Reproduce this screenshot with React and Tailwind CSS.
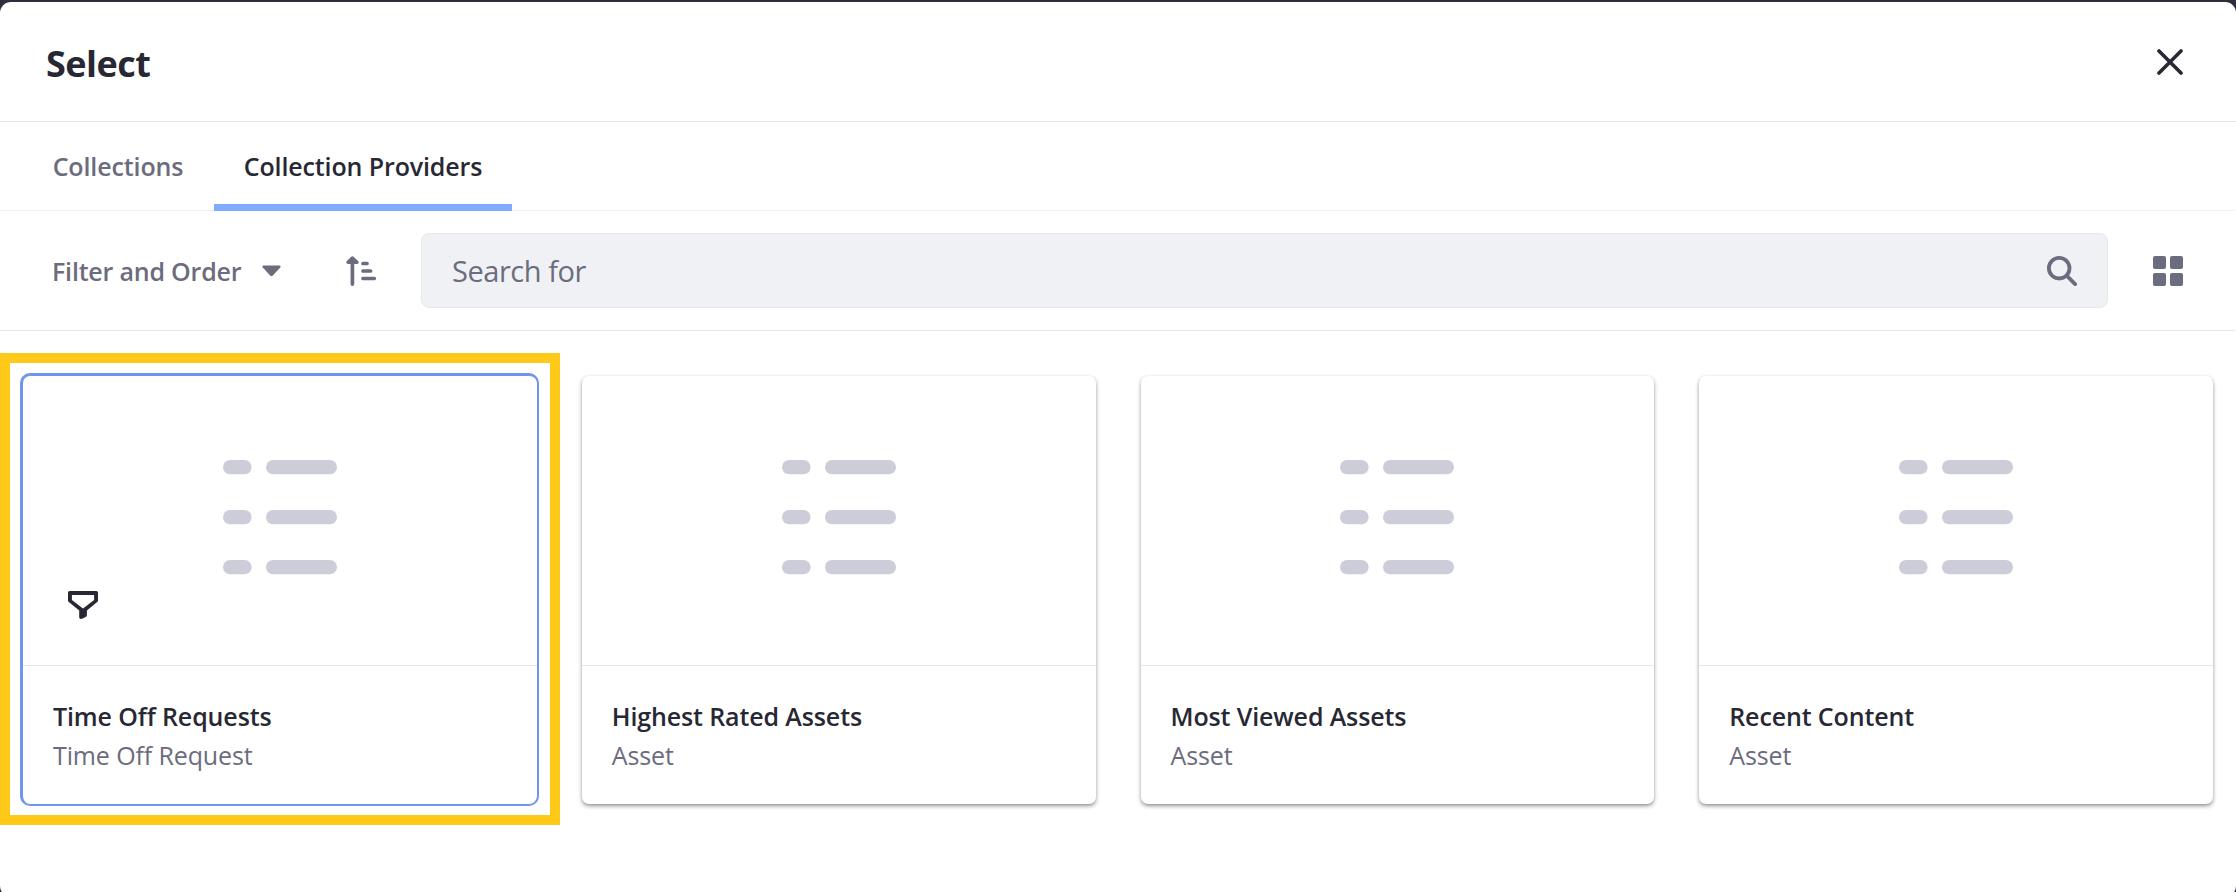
const cards = [
  { title: 'Time Off Requests', subtitle: 'Time Off Request', selected: true },
  { title: 'Highest Rated Assets', subtitle: 'Asset' },
  { title: 'Most Viewed Assets', subtitle: 'Asset' },
  { title: 'Recent Content', subtitle: 'Asset' },
];

function CloseIcon() {
  return (
    <svg width="26" height="26" viewBox="0 0 26 26" fill="none" stroke="currentColor" strokeWidth="3.6" strokeLinecap="round">
      <path d="M2 2 24 24M24 2 2 24" />
    </svg>
  );
}

function SortIcon() {
  return (
    <svg width="30" height="30" viewBox="0 0 30 30" fill="none" stroke="currentColor" strokeWidth="3.7" strokeLinecap="round" strokeLinejoin="round">
      <path d="M6.4 2.6V28.1M17 7.5h4M17 15h7.6M17 22.5h11.2" />
      <path d="M2 6.3 6.4 2l4.5 4.3z" fill="currentColor" strokeWidth="3.4" />
    </svg>
  );
}

function SearchIcon() {
  return (
    <svg width="30" height="30" viewBox="0 0 30 30" fill="none" stroke="currentColor" strokeWidth="3.8" strokeLinecap="round">
      <circle cx="12.2" cy="12.2" r="10.3" />
      <path d="m20.2 20.2 7.9 7.9" />
    </svg>
  );
}

function GridIcon() {
  return (
    <svg width="30" height="30" viewBox="0 0 30 30" fill="currentColor">
      <rect width="13" height="13" rx="1.9" />
      <rect x="17" width="13" height="13" rx="1.9" />
      <rect y="17" width="13" height="13" rx="1.9" />
      <rect x="17" y="17" width="13" height="13" rx="1.9" />
    </svg>
  );
}

function FilterIcon() {
  return (
    <svg width="30" height="28" viewBox="0 0 30 28" fill="currentColor" fillRule="evenodd">
      <path d="M1.6 0H28.4Q30 0 30 1.6V9.4Q30 10.4 29.2 11.1L18.9 19.4V24.2Q18.9 25.2 18 25.8L14.6 27.6Q11.2 28.6 11.2 26.2V19.4L.8 11.1Q0 10.4 0 9.4V1.6Q0 0 1.6 0ZM3.9 4V9L15 17.6 26.1 9V4Z" />
    </svg>
  );
}

function ListPicture() {
  return (
    <svg width="114" height="115" viewBox="0 0 114 115" fill="#cdcdda">
      {[0, 50, 100].map((y) => (
        <g key={y}>
          <rect y={y} width="28.6" height="14.3" rx="7.1" />
          <rect x="43" y={y} width="71" height="14.3" rx="7.1" />
        </g>
      ))}
    </svg>
  );
}

function Card({ title, subtitle, selected }) {
  return (
    <div className={selected ? 'relative h-[428px]' : 'relative h-[428px] rounded-[7px] shadow-[0_2px_5.6px_-1.9px_rgba(0,0,0,0.6)]'}>
      <div className="flex h-[290px] items-center justify-center border-b border-[#e7e7ea] pb-[6px]">
        <ListPicture />
      </div>
      <div className="px-[30px] pt-[31px] text-[25px] leading-[39px] tracking-[-0.12px]">
        <p className="font-semibold text-[#272833]">{title}</p>
        <p className="text-[#6b6c7e]">{subtitle}</p>
      </div>
      {selected && (
        <>
          <span className="absolute bottom-[185px] left-[45px] text-[#272833]">
            <FilterIcon />
          </span>
          <span className="absolute -top-[3px] -right-[2px] -bottom-[2px] -left-[3px] rounded-[10px] border-t-[3px] border-r-2 border-b-2 border-l-[3px] border-[#7095ec]" />
          <span className="absolute -top-[23px] -right-[23px] -bottom-[21px] -left-[23px] border-[10px] border-[#ffc91a]" />
        </>
      )}
    </div>
  );
}

export default function App() {
  return (
    <div className="h-[892px] w-[2236px] overflow-hidden bg-[#302e3d] pt-[2px] font-['Open_Sans',sans-serif]">
      <div className="h-[895px] rounded-[11px] bg-white">
        <header className="flex h-[120px] items-center justify-between border-b border-[#e7e7ea] pr-[53px] pl-[46px] text-[#272833]">
          <h1 className="pt-[5px] text-[36px] leading-[48px] font-bold tracking-[-0.5px]">Select</h1>
          <CloseIcon />
        </header>

        <nav className="mr-px flex h-[89px] border-b border-[#f0f0f3] pl-[22px] text-[25px] font-semibold tracking-[-0.12px]">
          <a className="flex h-[89px] w-[192px] items-center justify-center text-[#6b6c7e]">Collections</a>
          <a className="flex h-[89px] w-[298px] items-center justify-center border-y-[7px] border-t-transparent border-b-[#80acff] text-[#272833]">
            Collection Providers
          </a>
        </nav>

        <div className="mr-px flex h-[120px] items-center border-b border-[#e7e7ea] pr-[52px] pl-[52px] text-[#6b6c7e]">
          <button className="flex items-center text-[25px] font-semibold tracking-[-0.2px]">
            <span className="w-[210px] pt-[2px] text-left whitespace-nowrap">Filter and Order</span>
            <svg width="19" height="12" viewBox="0 0 19 12" fill="currentColor">
              <path d="M1.4.5H17.6Q19.4 1 18.2 2.6L10.6 10.8Q9.5 11.7 8.4 10.8L.8 2.6Q-.4 1 1.4.5Z" />
            </svg>
          </button>
          <span className="ml-[65px]">
            <SortIcon />
          </span>
          <div className="ml-[45px] flex h-[75px] flex-1 items-center justify-between rounded-[8px] border border-[#e7e7ed] bg-[#f0f1f5] pr-[30px] pl-[30px]">
            <span className="pt-px text-[29px] tracking-[-0.45px]">Search for</span>
            <SearchIcon />
          </div>
          <span className="ml-[45px]">
            <GridIcon />
          </span>
        </div>

        <main className="grid grid-cols-4 gap-[45px] pt-[45px] pr-[23px] pl-[23px]">
          {cards.map((card) => (
            <Card key={card.title} {...card} />
          ))}
        </main>
      </div>
    </div>
  );
}
